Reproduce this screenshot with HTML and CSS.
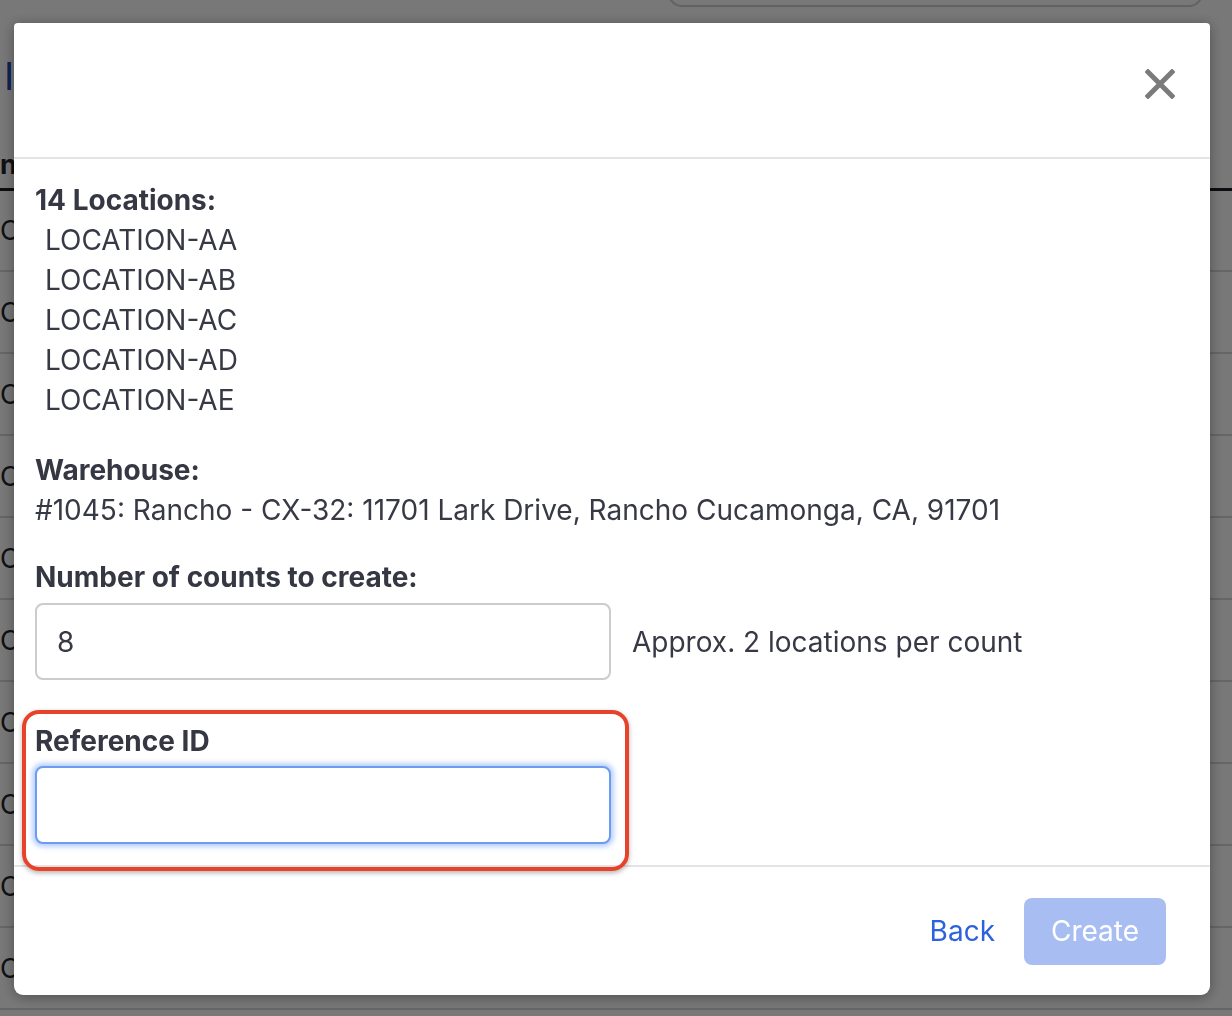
FILE: index.html
```html
<!DOCTYPE html>
<html lang="en">
<head>
<meta charset="utf-8">
<title>Create counts</title>
<link rel="stylesheet" href="styles.css">
</head>
<body>
<div class="page">
  <div class="page-top">
    <h1 class="page-title">I</h1>
    <div class="search"></div>
  </div>
  <table class="grid">
    <thead><tr><th>n</th></tr></thead>
    <tbody>
      <tr><td>C</td></tr>
      <tr><td>C</td></tr>
      <tr><td>C</td></tr>
      <tr><td>C</td></tr>
      <tr><td>C</td></tr>
      <tr><td>C</td></tr>
      <tr><td>C</td></tr>
      <tr><td>C</td></tr>
      <tr><td>C</td></tr>
      <tr><td>C</td></tr>
    </tbody>
  </table>
</div>

<div class="backdrop"></div>

<div class="modal" role="dialog">
  <div class="modal-header">
    <button class="close" aria-label="Close">
      <svg width="30" height="30" viewBox="0 0 30 30"><path d="M3 3 L27 27 M27 3 L3 27" stroke="#7b7b7b" stroke-width="5" stroke-linecap="square" fill="none"/></svg>
    </button>
  </div>
  <div class="modal-body">
    <div class="section locations">
      <div class="label">14 Locations:</div>
      <div class="loc">LOCATION-AA</div>
      <div class="loc">LOCATION-AB</div>
      <div class="loc">LOCATION-AC</div>
      <div class="loc">LOCATION-AD</div>
      <div class="loc">LOCATION-AE</div>
    </div>
    <div class="section warehouse">
      <div class="label">Warehouse:</div>
      <div class="text">#1045: Rancho - CX-32: 11701 Lark Drive, Rancho Cucamonga, CA, 91701</div>
    </div>
    <div class="section counts">
      <div class="label">Number of counts to create:</div>
      <div class="input-row">
        <input class="input" type="text" value="8">
        <span class="hint">Approx. 2 locations per count</span>
      </div>
    </div>
    <div class="section ref">
      <div class="label">Reference ID</div>
      <input class="input focused" type="text" value="">
      <div class="annotation"></div>
    </div>
  </div>
  <div class="modal-footer">
    <button class="btn-link">Back</button>
    <button class="btn-primary" disabled>Create</button>
  </div>
</div>
</body>
</html>
```

FILE: styles.css
```css
* { box-sizing: border-box; }
html, body { margin: 0; padding: 0; }
body {
  font-family: Inter, "Noto Sans", sans-serif;
  background: #ffffff;
  color: #373945;
  width: 1232px;
  height: 1016px;
  overflow: hidden;
}

/* underlying page */
.page { width: 1232px; }
.page-top {
  height: 150px;
  display: flex;
  justify-content: space-between;
  align-items: flex-start;
}
.page-title {
  margin: 54px 0 0 4px;
  font-size: 38px;
  font-weight: 400;
  color: #1f47b8;
  line-height: 44px;
}
.search {
  width: 535px;
  height: 40px;
  margin: -33px 29px 0 0;
  border: 2px solid #d0d0d8;
  border-radius: 14px;
}
.grid { border-collapse: collapse; width: 100%; }
.grid th {
  text-align: left;
  font-size: 27px;
  font-weight: 700;
  color: #22242d;
  padding: 0;
  height: 39px;
  line-height: 30px;
  vertical-align: top;
  border-bottom: 3px solid #1c1c24;
}
.grid td {
  font-size: 27px;
  color: #22242d;
  padding: 0;
  height: 82px;
  border-bottom: 2px solid #d9d9e0;
}

.backdrop {
  position: fixed;
  inset: 0;
  background: rgba(0, 0, 0, 0.53);
}

/* modal */
.modal {
  position: fixed;
  left: 14px;
  top: 23px;
  width: 1196px;
  height: 972px;
  background: #fff;
  border-radius: 4px 4px 9px 9px;
  box-shadow: 0 2px 14px rgba(0, 0, 0, 0.35);
  display: flex;
  flex-direction: column;
}
.modal-header {
  height: 136px;
  border-bottom: 2px solid #e4e4e6;
  display: flex;
  justify-content: flex-end;
  align-items: flex-start;
  padding: 46px 35px 0 0;
  flex-shrink: 0;
}
.close {
  border: 0;
  background: none;
  padding: 0;
  width: 30px;
  height: 30px;
  cursor: pointer;
}
.close svg { display: block; }

.modal-body {
  flex: 1;
  padding: 21px 21px 0 21px;
  font-size: 28px;
  line-height: 40px;
}
.section { margin-bottom: 30px; }
.warehouse { margin-bottom: 27px; }
.label { font-weight: 700; color: #353743; }
.loc { padding-left: 10px; }
.counts { margin-bottom: 0; }
.counts .label { margin-bottom: 6px; }
.input-row {
  display: flex;
  align-items: center;
  gap: 21px;
}
.input {
  display: block;
  width: 576px;
  height: 77px;
  border: 2px solid #cbcbd0;
  border-radius: 8px;
  padding: 0 20px;
  font-family: inherit;
  font-size: 28px;
  color: #373945;
  background: #fff;
  outline: none;
}
.hint { color: #373945; }
.ref {
  position: relative;
  margin-top: 41px;
  margin-bottom: 0;
}
.ref .label { margin-bottom: 5px; }
.input.focused {
  height: 78px;
  border-color: #6b9cf0;
  box-shadow: 0 0 5px 3px rgba(100, 150, 245, 0.45);
}
.annotation {
  position: absolute;
  left: -13px;
  top: -11px;
  width: 607px;
  height: 161px;
  border: 4px solid #e6432a;
  border-radius: 17px;
  box-shadow: 0 2px 5px rgba(0, 0, 0, 0.3);
  pointer-events: none;
}

.modal-footer {
  height: 130px;
  border-top: 2px solid #e4e4e6;
  display: flex;
  justify-content: flex-end;
  align-items: center;
  padding-right: 44px;
  gap: 29px;
  flex-shrink: 0;
}
.btn-link {
  border: 0;
  background: none;
  padding: 0;
  font-family: inherit;
  font-size: 28px;
  color: #2c62de;
  cursor: pointer;
}
.btn-primary {
  width: 142px;
  height: 67px;
  border: 0;
  border-radius: 8px;
  background: #a8bef3;
  color: #fff;
  font-family: inherit;
  font-size: 28px;
  padding: 0;
}
```
